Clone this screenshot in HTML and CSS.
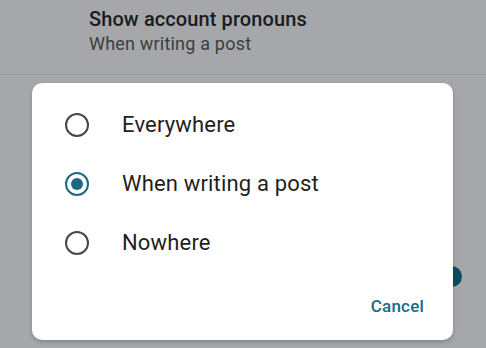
FILE: index.html
```html
<!DOCTYPE html>
<html>
<head>
<meta charset="utf-8">
<link rel="stylesheet" href="styles.css">
</head>
<body>
<div class="screen">
  <div class="setting">
    <div class="setting-title">Show account pronouns</div>
    <div class="setting-sub">When writing a post</div>
  </div>
  <div class="divider"></div>
  <div class="knob"></div>
  <div class="dialog">
    <div class="options">
      <div class="option">
        <span class="radio"></span>
        <span class="label">Everywhere</span>
      </div>
      <div class="option">
        <span class="radio checked"></span>
        <span class="label">When writing a post</span>
      </div>
      <div class="option">
        <span class="radio"></span>
        <span class="label">Nowhere</span>
      </div>
    </div>
    <div class="actions">
      <span class="btn">Cancel</span>
    </div>
  </div>
</div>
</body>
</html>
```
FILE: styles.css
```css
html, body {
  margin: 0;
  padding: 0;
}
body {
  background: #a5a7aa;
  font-family: Roboto, "Liberation Sans", sans-serif;
  width: 486px;
  height: 348px;
  overflow: hidden;
}
.screen {
  position: relative;
  height: 348px;
}
.setting {
  height: 74px;
  box-sizing: border-box;
  padding: 7px 0 0 89px;
}
.setting-title {
  font-size: 20px;
  font-weight: 500;
  color: #1b1c1d;
  line-height: 24px;
  letter-spacing: 0.1px;
}
.setting-sub {
  font-size: 18px;
  color: #3c3e40;
  line-height: 26px;
  letter-spacing: 0.2px;
}
.divider {
  height: 1px;
  background: #97999c;
}
.knob {
  position: absolute;
  left: 441px;
  top: 266px;
  width: 21px;
  height: 21px;
  border-radius: 50%;
  background: #0f4b60;
}
.dialog {
  position: relative;
  margin: 8px 0 0 32px;
  width: 421px;
  height: 257px;
  background: #ffffff;
  border-radius: 10px;
  box-shadow: 0 2px 4px rgba(0,0,0,0.2);
  box-sizing: border-box;
  padding-top: 12px;
  display: flex;
  flex-direction: column;
}
.option {
  height: 59px;
  display: flex;
  align-items: center;
  padding-left: 33px;
}
.radio {
  width: 24px;
  height: 24px;
  box-sizing: border-box;
  border: 2.4px solid #44474a;
  border-radius: 50%;
  display: flex;
  align-items: center;
  justify-content: center;
  flex: none;
}
.radio.checked {
  border-color: #1a6a86;
}
.radio.checked::after {
  content: "";
  width: 12px;
  height: 12px;
  border-radius: 50%;
  background: #1a6a86;
}
.label {
  margin-left: 33px;
  font-size: 22px;
  color: #1f1f21;
  letter-spacing: 0.17px;
}
.actions {
  flex: 1;
  display: flex;
  justify-content: flex-end;
  align-items: center;
  padding: 0 29px 0 0;
}
.btn {
  font-size: 17px;
  font-weight: 500;
  color: #1a6a86;
  letter-spacing: 0.2px;
}
```
